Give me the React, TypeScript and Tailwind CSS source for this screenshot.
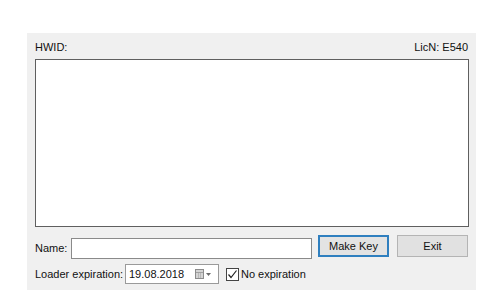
export default function App() {
  return (
    <div
      className="w-[485px] h-[302px] bg-white pt-[33px] pl-[27px] text-[11px] text-[#111]"
      style={{ fontFamily: '"Liberation Sans", Arial, sans-serif' }}
    >
      <div className="w-[449px] h-[257px] bg-[#f0f0f0] pl-[8px] pr-[7px]">
        {/* header */}
        <div className="h-[26px] pt-[8px] flex justify-between leading-[13px]">
          <span>HWID:</span>
          <span className="pr-[1px]">LicN: E540</span>
        </div>
        {/* hwid box */}
        <div className="h-[168px] bg-white border border-[#5f5f5f]" />
        {/* name row */}
        <div className="mt-[8px] h-[22px] flex items-start">
          <span className="w-[36px] mt-[7px] leading-[13px]">Name:</span>
          <div className="w-[241px] h-[21px] mt-[3px] bg-white border border-[#8a8a8a]" />
          <button className="ml-[6px] w-[71px] h-[22px] bg-[#e3e3e3] border-2 border-[#2f7fbf] leading-[18px]">
            Make Key
          </button>
          <button className="ml-[8px] w-[71px] h-[22px] bg-[#e1e1e1] border border-[#b4b4b4] leading-[20px]">
            Exit
          </button>
        </div>
        {/* expiration row */}
        <div className="mt-[7px] flex items-center h-[20px]">
          <span className="w-[90px] leading-[13px]">Loader expiration:</span>
          <div className="w-[94px] h-[20px] bg-white border border-[#9a9a9a] flex items-center pl-[3px] pr-[4px]">
            <span className="flex-1 leading-[13px]">19.08.2018</span>
            <svg width="20" height="12" viewBox="0 0 20 12">
              <rect x="1.5" y="1.5" width="8" height="9" fill="#d4d4d4" stroke="#8c8c8c" />
              <line x1="2" y1="4.5" x2="9" y2="4.5" stroke="#a0a0a0" />
              <line x1="4.5" y1="5" x2="4.5" y2="10" stroke="#b8b8b8" />
              <line x1="6.5" y1="5" x2="6.5" y2="10" stroke="#b8b8b8" />
              <path d="M12 5 L17 5 L14.5 8 Z" fill="#6a6a6a" />
            </svg>
          </div>
          <div className="ml-[7px] w-[13px] h-[13px] bg-white border border-[#444] flex items-center justify-center">
            <svg width="11" height="11" viewBox="0 0 11 11">
              <path d="M1.5 5.5 L4 8.5 L9.5 1.5" fill="none" stroke="#222" strokeWidth="1.2" />
            </svg>
          </div>
          <span className="ml-[2px] leading-[13px]">No expiration</span>
        </div>
      </div>
    </div>
  );
}
